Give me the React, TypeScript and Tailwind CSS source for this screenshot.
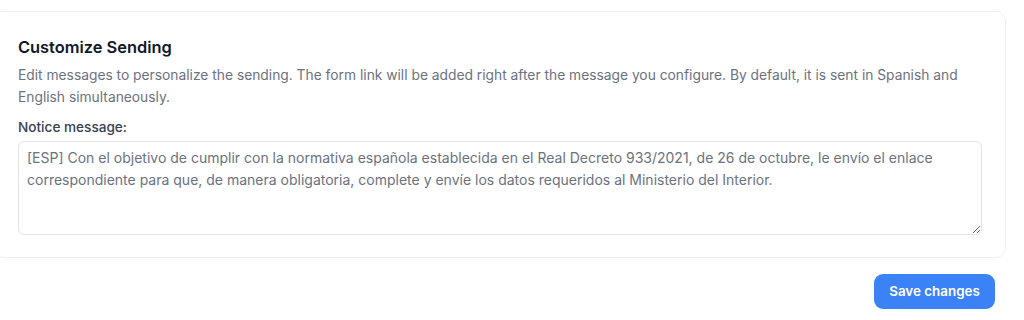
import { useState } from "react";

const DEFAULT_NOTICE =
  "[ESP] Con el objetivo de cumplir con la normativa española establecida en el Real Decreto 933/2021, de 26 de octubre, le envío el enlace correspondiente para que, de manera obligatoria, complete y envíe los datos requeridos al Ministerio del Interior.";

export default function App() {
  const [notice, setNotice] = useState(DEFAULT_NOTICE);

  return (
    <div className="min-h-[320px] w-[1024px] overflow-hidden bg-white pt-[11px] font-['Inter','Noto_Sans',sans-serif]">
      <section className="-ml-[6px] w-[1012px] rounded-[10px] border border-[#efefef] bg-white px-[23px] pt-[23px] pb-[22px]">
        <h2 className="text-[16.4px] leading-6 font-semibold text-[#111827]">Customize Sending</h2>
        <p className="mt-[5px] text-[13.8px] leading-[22px] text-[#6b7280]">
          Edit messages to personalize the sending. The form link will be added right after the message you configure. By default, it is sent in Spanish and English simultaneously.
        </p>
        <label htmlFor="notice" className="mt-[9px] block text-[13.6px] leading-5 font-medium text-[#374151]">
          Notice message:
        </label>
        <textarea
          id="notice"
          value={notice}
          onChange={(e) => setNotice(e.target.value)}
          className="mt-1 block h-[94px] w-full rounded-[6px] border border-[#e3e3e3] px-2 py-[5px] text-[14px] leading-[22px] text-[#6b7280] outline-none"
        />
      </section>
      <div className="flex justify-end pt-4 pr-[29px]">
        <button
          type="button"
          className="h-[35px] w-[121px] rounded-[9px] bg-[#3b82f6] text-[13.4px] font-semibold text-white"
        >
          Save changes
        </button>
      </div>
    </div>
  );
}
